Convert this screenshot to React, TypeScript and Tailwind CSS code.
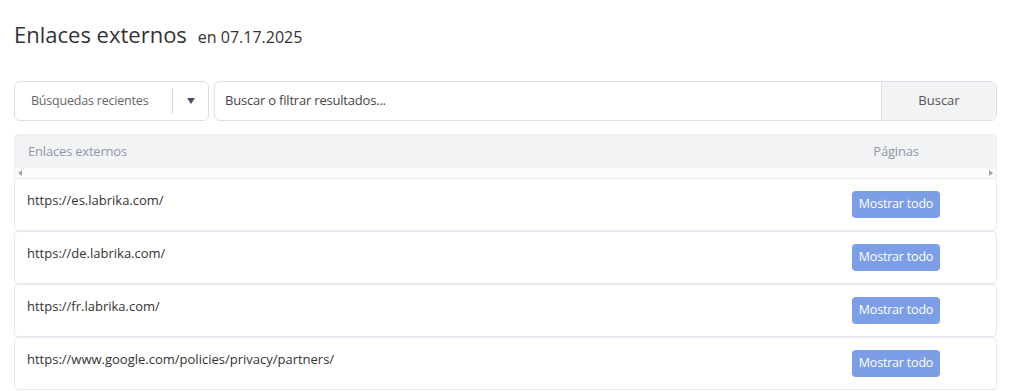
const links = [
  "https://es.labrika.com/",
  "https://de.labrika.com/",
  "https://fr.labrika.com/",
  "https://www.google.com/policies/privacy/partners/",
];

const LinkRow = ({ url }: { url: string }) => {
  return (
    <div className="h-[53px] flex border border-[#e6e9f0] rounded-[4px] bg-white">
      <div className="flex-1 pl-[12px] pt-[12px] text-[13px] text-[#333]">{url}</div>
      <div className="w-[200px] flex items-center justify-center">
        <button className="h-[27px] w-[88px] rounded-[4px] bg-[#7c9ee7] text-white text-[12.5px] tracking-[-0.2px]">
          Mostrar todo
        </button>
      </div>
    </div>
  );
};

const App = () => {
  return (
    <div
      className="w-[1010px] h-[391px] bg-white pl-[14px] pr-[13px] overflow-hidden"
      style={{ fontFamily: '"Open Sans", "Noto Sans", sans-serif' }}
    >
      <div className="h-[81px] flex items-baseline pt-[19px]">
        <h1 className="text-[22px] text-[#333] leading-[30px]">Enlaces externos</h1>
        <span className="ml-[11px] text-[16px] text-[#333]">en 07.17.2025</span>
      </div>

      <div className="flex gap-[5px] h-[40px]">
        <div className="w-[195px] flex items-center border border-[#dcdfe6] rounded-[6px] bg-white">
          <span className="flex-1 pl-[16px] text-[12.5px] text-[#666] tracking-[-0.2px]">Búsquedas recientes</span>
          <div className="w-px h-[26px] bg-[#d5d8de]" />
          <div className="w-[35px] flex justify-center">
            <svg width="8" height="6" viewBox="0 0 8 6">
              <path d="M0 0h8L4 6z" fill="#4a5068" />
            </svg>
          </div>
        </div>
        <div className="flex-1 flex border border-[#dcdfe6] rounded-[6px] overflow-hidden">
          <input
            placeholder="Buscar o filtrar resultados..."
            className="flex-1 px-[10px] text-[13px] text-[#333] placeholder:text-[#444] outline-none tracking-[-0.2px]"
          />
          <button className="w-[115px] border-l border-[#dcdfe6] bg-[#f2f3f5] text-[13px] text-[#555]">
            Buscar
          </button>
        </div>
      </div>

      <div className="mt-[13px]">
        <div className="h-[34px] flex items-center bg-[#f2f3f5] rounded-t-[4px] border-x border-t border-[#eceef2] text-[13px] text-[#8f98ab] tracking-[-0.2px]">
          <div className="flex-1 pl-[13px]">Enlaces externos</div>
          <div className="w-[200px] text-center">Páginas</div>
        </div>
        <div className="h-[10px] flex items-center justify-between px-[3px] bg-[#fbfbfb] border-x border-[#eceef2]">
          <svg width="4" height="6" viewBox="0 0 4 6">
            <path d="M4 0v6L0 3z" fill="#a3a3a3" />
          </svg>
          <svg width="4" height="6" viewBox="0 0 4 6">
            <path d="M0 0v6l4-3z" fill="#a3a3a3" />
          </svg>
        </div>
        {links.map((url) => (
          <LinkRow key={url} url={url} />
        ))}
      </div>
    </div>
  );
};

export default App;
